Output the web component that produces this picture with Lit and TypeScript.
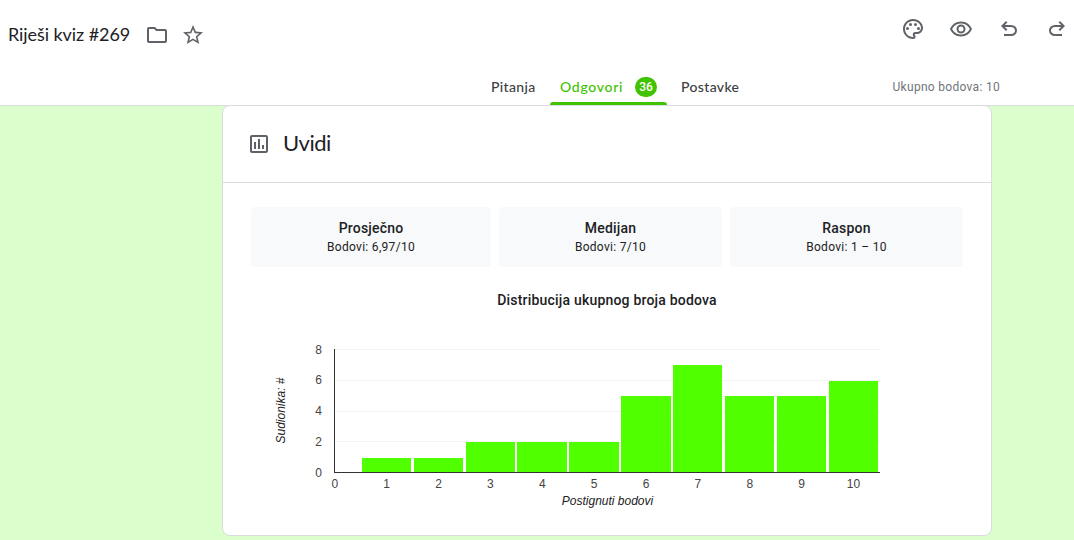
import { LitElement, html, css, svg } from "lit";
import { customElement } from "lit/decorators.js";

const SCORES = [1, 1, 2, 2, 2, 5, 7, 5, 5, 6];
const BARS: [number, number][] = [
  [362, 49], [414, 49], [466, 49], [517, 50], [569, 50],
  [621, 50], [673, 49], [725, 49], [777, 49], [829, 49],
];
const TOPS: Record<number, number> = { 1: 458, 2: 442, 5: 396, 6: 381, 7: 365 };
// value, gridline y, label baseline
const GRID: [number, number, number][] = [
  [8, 349, 354], [6, 380, 384], [4, 411, 415], [2, 441, 446], [0, 472, 477],
];

@customElement("score-chart")
export class ScoreChart extends LitElement {
  static styles = css`
    :host { display: block; }
    svg { display: block; }
    text { font: 12px "Liberation Sans", Arial, sans-serif; fill: #444; }
    .title { font-style: italic; fill: #222; }
  `;
  render() {
    return html`<svg width="712" height="190" viewBox="251 330 712 190" shape-rendering="crispEdges">
      ${GRID.map(([v, y, base]) => svg`
        ${v ? svg`<rect x="335" y=${y} width="545" height="1" fill="#f3f3f3"></rect>` : ""}
        <text x="322" y=${base} text-anchor="end">${v}</text>`)}
      ${SCORES.map((s, i) => svg`
        <rect x=${BARS[i][0]} y=${TOPS[s]} width=${BARS[i][1]} height=${472 - TOPS[s]} fill="#50ff00"></rect>`)}
      <rect x="334" y="349" width="1" height="124" fill="#333"></rect>
      <rect x="334" y="472" width="546" height="1" fill="#333"></rect>
      ${[0, ...SCORES].map((_, i) => svg`<text x=${334.8 + i * 51.87} y="488" text-anchor="middle">${i}</text>`)}
      <text class="title" x="607.5" y="505" text-anchor="middle">Postignuti bodovi</text>
      <text class="title" transform="translate(285 410.5) rotate(-90)" text-anchor="middle">Sudionika: #</text>
    </svg>`;
  }
}

@customElement("app-root")
export class AppRoot extends LitElement {
  static styles = css`
    :host {
      display: block; height: 540px; overflow: hidden; background: #dbffcc;
      font-family: Roboto, sans-serif; color: #202124;
    }
    svg { display: block; fill: #5f6368; flex: none; }
    header {
      box-sizing: border-box; height: 106px; background: #fff; border-bottom: 1px solid #dadce0;
      display: flex; flex-direction: column; justify-content: space-between;
    }
    .bar { display: flex; justify-content: space-between; height: 70px; box-sizing: border-box; }
    .doc { display: flex; align-items: center; padding-left: 8px; }
    .name { font: 18px/24px Lato, sans-serif; width: 137px; letter-spacing: -0.07px; white-space: nowrap; padding-bottom: 2px; }
    .star { margin-left: 12px; }
    .tools { display: flex; align-items: center; gap: 24px; height: 58px; padding-right: 5px; }
    .nav { display: flex; height: 35px; padding-left: 479px; }
    .tab {
      display: flex; align-items: center; padding: 0 12px; position: relative; box-sizing: border-box;
      font: 500 14px/20px Lato, sans-serif; letter-spacing: .35px; color: #3c4043; white-space: nowrap; height: 33px;
    }
    .first { width: 69px; }
    .active { color: #41c300; width: 121px; justify-content: space-between; padding-right: 12px; letter-spacing: .7px; }
    .active::after {
      content: ""; position: absolute; left: 2px; width: 117px; top: 32px; height: 3px;
      background: #41c300; border-radius: 3px 3px 0 0;
    }
    .badge {
      width: 22px; height: 20px; border-radius: 10px; background: #41c300; color: #fff;
      font: 500 12px/20px Roboto, sans-serif; letter-spacing: 0; text-align: center;
    }
    .last { width: 83px; }
    .total { margin-left: 140.5px; font-size: 12px; line-height: 35px; letter-spacing: .3px; color: #70757a; }
    .card {
      box-sizing: border-box; width: 770px; height: 431px; margin: -1px 0 0 222px; position: relative;
      background: #fff; border: 1px solid #dadce0; border-radius: 8px;
    }
    .head {
      display: flex; align-items: center; gap: 12px; height: 76px; padding-left: 24px;
      border-bottom: 1px solid #dadce0;
    }
    .head h2 { margin: 0; padding-bottom: 2px; font: 400 22px/28px Lato, sans-serif; letter-spacing: -.5px; }
    .stats { display: grid; grid-template-columns: 240px 223px 233px; gap: 8px; padding: 24px 28px 0; }
    .stat {
      height: 60px; box-sizing: border-box; padding-top: 11px; background: #f8f9fa;
      border-radius: 4px; text-align: center;
    }
    .label, .caption { font-weight: 500; font-size: 14px; line-height: 20px; letter-spacing: .2px; }
    .value { font-size: 12px; line-height: 19px; letter-spacing: .3px; }
    .caption { text-align: center; margin-top: 23px; }
    .chart { padding: 20px 28px 0; }
  `;

  icon(d: string, size = 24, cls = "") {
    return html`<svg class=${cls} width=${size} height=${size} viewBox="0 0 24 24"><path d=${d}></path></svg>`;
  }

  render() {
    const stats = [["Prosječno", "Bodovi: 6,97/10"], ["Medijan", "Bodovi: 7/10"], ["Raspon", "Bodovi: 1 – 10"]];
    return html`
      <header>
        <div class="bar">
          <div class="doc">
            <span class="name">Riješi kviz #269</span>
            ${this.icon("M9.170 6l2 2H20v10H4V6h5.170M10 4H4c-1.100 0-1.990.9-1.990 2L2 18c0 1.100.9 2 2 2h16c1.100 0 2-.9 2-2V8c0-1.100-.9-2-2-2h-8l-2-2z")}
            ${this.icon("M22 9.240l-7.190-.62L12 2 9.190 8.630 2 9.240l5.460 4.730L5.820 21 12 17.270 18.180 21l-1.630-7.030L22 9.240zM12 15.400l-3.760 2.270 1-4.280-3.320-2.880 4.380-.38L12 6.100l1.710 4.040 4.380.38-3.320 2.880 1 4.280L12 15.400z", 24, "star")}
          </div>
          <div class="tools">
            <svg width="24" height="24" viewBox="0 0 24 24">
              <path d="M12 22C6.490 22 2 17.510 2 12S6.490 2 12 2s10 4.040 10 9c0 3.310-2.690 6-6 6h-1.770c-.28 0-.5.22-.5.5 0 .12.050.23.130.33.41.47.64 1.060.64 1.670A2.500 2.500 0 0 1 12 22zm0-18c-4.410 0-8 3.590-8 8s3.590 8 8 8c.28 0 .5-.22.5-.5 0-.16-.08-.28-.14-.35-.41-.46-.63-1.050-.63-1.650a2.500 2.500 0 0 1 2.500-2.500H16c2.210 0 4-1.790 4-4 0-3.860-3.590-7-8-7z"></path>
              <circle cx="6.500" cy="11.500" r="1.500"></circle><circle cx="9.500" cy="7.500" r="1.500"></circle>
              <circle cx="14.500" cy="7.500" r="1.500"></circle><circle cx="17.500" cy="11.500" r="1.500"></circle>
            </svg>
            ${this.icon("M12 6.500c3.790 0 7.170 2.130 8.820 5.500-1.650 3.370-5.020 5.500-8.820 5.500S4.830 15.370 3.180 12C4.830 8.630 8.210 6.500 12 6.500m0-2C7 4.500 2.730 7.610 1 12c1.730 4.390 6 7.500 11 7.500s9.270-3.110 11-7.500c-1.730-4.390-6-7.500-11-7.500zm0 5a2.500 2.500 0 0 1 0 5 2.500 2.500 0 0 1 0-5m0-2c-2.480 0-4.500 2.020-4.500 4.500s2.020 4.500 4.500 4.500 4.500-2.020 4.500-4.500-2.020-4.500-4.500-4.500z")}
            ${this.icon("M7 19v-2h7.100q1.575 0 2.738-1T18 13.500 16.838 11 14.100 10H7.800l2.600 2.600L9 14 4 9l5-5 1.400 1.400L7.800 8h6.300q2.425 0 4.163 1.575T20 13.500t-1.737 3.925T14.100 19Z")}
            ${this.icon("M17 19v-2H9.900q-1.575 0-2.738-1T6 13.500 7.162 11 9.900 10h6.300l-2.600 2.600L15 14l5-5-5-5-1.400 1.400L16.200 8H9.900q-2.425 0-4.163 1.575T4 13.500t1.737 3.925T9.900 19Z")}
          </div>
        </div>
        <nav class="nav">
          <div class="tab first">Pitanja</div>
          <div class="tab active">Odgovori<span class="badge">36</span></div>
          <div class="tab last">Postavke</div>
          <div class="total">Ukupno bodova: 10</div>
        </nav>
      </header>
      <section class="card">
        <div class="head">
          ${this.icon("M19 3H5c-1.100 0-2 .9-2 2v14c0 1.100.9 2 2 2h14c1.100 0 2-.9 2-2V5c0-1.100-.9-2-2-2zm0 16H5V5h14v14zM7 10h2v7H7zm4-3h2v10h-2zm4 6h2v4h-2z")}
          <h2>Uvidi</h2>
        </div>
        <div class="stats">
          ${stats.map(([l, v]) => html`<div class="stat"><div class="label">${l}</div><div class="value">${v}</div></div>`)}
        </div>
        <div class="caption">Distribucija ukupnog broja bodova</div>
        <div class="chart"><score-chart></score-chart></div>
      </section>`;
  }
}
